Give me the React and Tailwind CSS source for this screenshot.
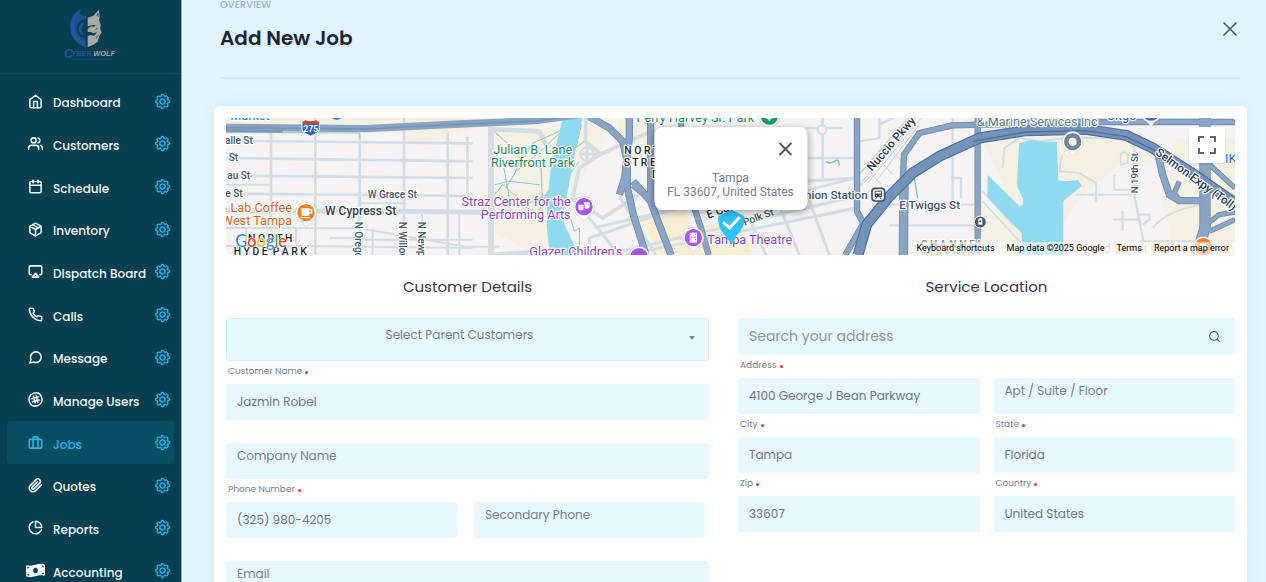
import React from "react";
import {
  FiHome,
  FiUsers,
  FiCalendar,
  FiPackage,
  FiAirplay,
  FiPhone,
  FiMessageCircle,
  FiBriefcase,
  FiPaperclip,
  FiPieChart,
  FiSearch,
} from "react-icons/fi";
import { BsGear } from "react-icons/bs";
import { FaMoneyBillWave } from "react-icons/fa";

function HashBadge({ className }) {
  return (
    <svg viewBox="0 0 24 24" fill="none" stroke="currentColor" className={className} aria-hidden="true">
      <path d="M8.5 2.2C14 .4 18.6 1.5 20.8 6.2C23.8 12.5 22.8 18.4 16.5 21.3C9.5 24.2 4.5 22 2.4 16C.4 9.5 2.3 4.5 8.5 2.2Z" />
      <path d="M8.7 6.8L11.5 17.2M13 5.8L15.8 16.2M6 10.8L16.7 7.9M7.4 15.6L18.2 12.7" strokeLinecap="round" />
    </svg>
  );
}

const NAV = [
  { label: "Dashboard", Icon: FiHome },
  { label: "Customers", Icon: FiUsers },
  { label: "Schedule", Icon: FiCalendar },
  { label: "Inventory", Icon: FiPackage },
  { label: "Dispatch Board", Icon: FiAirplay },
  { label: "Calls", Icon: FiPhone },
  { label: "Message", Icon: FiMessageCircle },
  { label: "Manage Users", Icon: HashBadge },
  { label: "Jobs", Icon: FiBriefcase, active: true },
  { label: "Quotes", Icon: FiPaperclip },
  { label: "Reports", Icon: FiPieChart },
  { label: "Accounting", Icon: FaMoneyBillWave, wide: true },
];

function Logo() {
  return (
    <svg viewBox="190 20 165 165" className="size-[55px]" role="img" aria-label="Cyber Wolf">
      <path d="M246 27C222 34 210 57 212 84C214 112 230 132 258 140V122C238 118 228 104 227 84C226 60 234 42 246 27Z" fill="#1f55a0" />
      <path d="M246 27C232 40 226 60 227 84C228 104 238 118 258 122V114C243 112 232 102 231 86C230 70 240 58 259 57V46C240 48 236 40 246 27Z" fill="#1f55a0" opacity=".8" />
      <path d="M253 66C238 68 234 84 240 96C243 102 247 105 252 106L250 98C243 91 244 76 253 71Z" fill="#1f55a0" />
      <path
        d="M264 52L281 46L298 28L300 50L298 58L304 76L301 84L306 96L299 108L294 124L280 134L264 140V108L271 104L284 106L292 96L281 99L272 94L264 95V86L275 78L283 80L288 74L276 75L264 78Z"
        fill="#a9a9a7"
      />
      <path d="M291 47L295 39L296 50M287 88L295 83M289 114L296 104" fill="none" stroke="#053f50" strokeWidth="2" />
      <text x="193" y="172" fontFamily="Liberation Sans, sans-serif" fontSize="37" fontWeight="700" fontStyle="italic" fill="#1f55a0">C</text>
      <text x="215" y="168" fontFamily="Liberation Sans, sans-serif" fontSize="22" fontWeight="700" fontStyle="italic" fill="#1f55a0">YBER</text>
      <text x="281" y="168" fontFamily="Liberation Sans, sans-serif" fontSize="22" fontWeight="700" fontStyle="italic" fill="#a9a9a7">WOLF</text>
      <path d="M215 177H338" stroke="#1b4f80" strokeWidth="3" strokeDasharray="4 3" />
    </svg>
  );
}

function Sidebar() {
  return (
    <aside className="w-[182px] shrink-0 overflow-hidden border-r border-[#8fb0bd] bg-[#053f50]">
      <div className="flex h-[74px] justify-center border-b border-[#12495a] pt-[7px]">
        <Logo />
      </div>
      <nav aria-label="Main" className="px-[7px] pt-[6px]">
        <ul className="grid h-[512px] grid-rows-12">
          {NAV.map(({ label, Icon, active, wide }) => (
            <li
              key={label}
              className={
                active
                  ? "flex items-center rounded bg-[#084e62] pr-1 pl-5 text-[#2bb3ea]"
                  : "flex items-center pr-1 pl-5 text-[#f1f6f8]"
              }
            >
              <a href="#" className="flex flex-1 items-center gap-[10px] whitespace-nowrap">
                <span className="flex w-4 justify-center">
                  <Icon className={wide ? "size-[19px] shrink-0" : "size-[15px] shrink-0 stroke-[2.5]"} />
                </span>
                <span className="pt-1 text-xs leading-5 font-medium">{label}</span>
              </a>
              <button type="button" aria-label={label + " settings"} className="text-[#22b9f5]">
                <BsGear className="size-[15px] overflow-visible stroke-current stroke-[0.5]" />
              </button>
            </li>
          ))}
        </ul>
      </nav>
    </aside>
  );
}

const HALO = { stroke: "#ffffff", strokeWidth: 7, strokeLinejoin: "round", paintOrder: "stroke" };

function Pin({ x, y, color, children }) {
  return (
    <g transform={`translate(${x} ${y})`}>
      <path d="M0 43L-14 28A31 31 0 1 1 14 28Z" fill="#ffffff" stroke="#c5c9cc" strokeWidth="1.5" />
      <circle r="26" fill={color} />
      {children}
    </g>
  );
}

const MINOR_HIGHWAYS = [
  { d: "M1090 -4L1150 30L1190 70L1204 130V210L1222 290L1260 411", w: 20 },
  { d: "M1210 -4V60L1196 180L1180 230M1274 -4V250L1222 190M1222 200L1270 240L1300 320L1335 411", w: 20 },
  { d: "M1365 0V60M1395 240L1425 330L1448 411", w: 17 },
  { d: "M1893 -4V280L1920 330M1858 411L1910 320L2040 190", w: 17 },
  { d: "M2255 0V411", w: 17 },
  { d: "M2032 411L2034 200", w: 26 },
  { d: "M2030 200L2034 110L2080 45L2180 22L2350 18L2440 12H3027", w: 17 },
  { d: "M2937 0V330L2912 411", w: 32 },
  { d: "M2795 105L2810 170L2830 230L2860 248H2930", w: 20 },
  { d: "M2860 190L2845 225L2860 246M2940 130L3027 210M2940 320L2980 290L3027 282M2950 340L3027 305", w: 14 },
];

const EXPRESSWAY = "M1896 411L1922 320L1990 235L2060 165L2140 115L2260 60L2400 38L2580 34L2700 52L2780 90L2890 160L3027 255";

function MapDrawing() {
  return (
    <svg
      viewBox="0 0 3027 411"
      preserveAspectRatio="xMidYMid slice"
      className="block h-[137px] w-full"
      fontFamily="Roboto, sans-serif"
      role="img"
      aria-label="Map of Tampa"
    >
      <rect width="3027" height="411" fill="#f5f3f4" />

      {/* park and district tints */}
      <g fill="#f5f0e4">
        <path d="M0 0H900V20L760 24L640 66L560 70L500 44H0Z" />
        <path d="M790 30H1080L1000 260L900 200L800 90Z" />
        <path d="M800 210L955 220L960 300L930 411L800 340Z" />
        <path d="M960 310L980 411H925L915 360Z" />
        <path d="M1080 0H1150L1130 90L1080 160L1040 240L1030 180Z" />
        <path d="M1170 0H1260L1330 200L1180 60Z" />
        <path d="M1240 300L1370 240L1420 411H1300Z" fill="#f8eed3" />
        <path d="M1400 330L1540 300L1580 411H1420Z" fill="#f8eed3" />
        <path d="M2270 70L2500 40L2720 50L2800 140L2680 140L2560 240L2500 330V411H2270V330L2360 250Z" />
        <path d="M2850 60H3027V411H2850L2810 260Z" />
        <path d="M2260 250L2400 411H2260Z" />
      </g>

      {/* local streets */}
      <g fill="none" stroke="#d4dde4" strokeWidth="8">
        <path d="M0 68L740 76M0 120L740 130M0 173L740 180M0 227L740 234" />
        <path d="M0 200H130M400 256H540M0 330L400 331L720 386H820M400 360H310M380 365H740" strokeWidth="6" />
        <path d="M0 384H240L740 390" strokeWidth="6" />
        <path d="M135 40V340M268 0V411M401 44V411M534 0V411M665 44V411M724 56V236" />
        <path d="M588 284V411M700 290V411M440 331V411M60 331V384M210 331V384" strokeWidth="6" />
        <path d="M0 278L480 280L930 284" strokeWidth="15" />
        <path d="M795 26V411" strokeWidth="18" />
        <path d="M800 34L940 40L965 90M795 411L930 402H960" strokeWidth="14" />
        <path d="M1080 0L1078 70L1125 108L1265 45M1125 108L1060 150L1040 240L1130 300L1270 210" strokeWidth="11" />
        <circle cx="1083" cy="108" r="20" strokeWidth="6" />
        <path d="M1060 108H1120M1083 70V140M1040 240L1180 411M1090 411V360L1560 200L1890 180" strokeWidth="9" />
        <path d="M1140 411L1890 235M1105 330L1700 190M1200 411L1890 270M1180 235L1290 411M1620 411L1570 300M1720 411L1650 240M1810 411L1740 220" strokeWidth="9" />
        <path d="M1650 120H1890M1790 0V180M1740 30H1850M1890 180L1650 240" strokeWidth="8" />
        <circle cx="1788" cy="35" r="13" strokeWidth="6" fill="#f5f3f4" />
        <path d="M1900 70L1960 60V0M1960 20L2010 -5M1990 260H2250M1990 322H2260M2180 0V260M2175 180H2205V240" strokeWidth="7" />
        <path d="M2330 150L2335 90L2380 60L2440 70L2520 60H2740M2508 110L2500 160L2560 165L2610 195V250M2665 170V215H2740M2550 230H2720" strokeWidth="6" />
        <path d="M2725 50V230L2760 411M2660 305H2740M2690 280V340M2740 290H2770V305L2750 320M2740 370H2920" strokeWidth="7" />
        <path d="M2270 220L2360 320M2270 250L2390 380M2780 330Q2830 270 2940 260M2685 140C2680 100 2690 95 2705 110V135Z" strokeWidth="5" />
      </g>

      {/* rail yard */}
      <g fill="none" stroke="#c9cdd1" strokeWidth="3">
        <path d="M1900 200L2070 0M1925 195L2085 0M1950 190L2080 20M1935 165L1970 205M1965 130L2000 170M1995 95L2030 135M2025 60L2060 100M1890 215L1940 170" />
        <path d="M1890 180L2055 -10" stroke="#a7d9c4" strokeWidth="4" />
        <path d="M2065 180L2075 240M1800 130Q1810 140 1825 130T1840 142" stroke="#7cc5a5" strokeWidth="4" />
      </g>

      {/* park paths */}
      <g fill="none" stroke="#8ccdb0" strokeWidth="3">
        <path d="M0 44H170L400 45L402 60" />
        <path d="M806 42L860 90L890 130L920 75L1000 40M840 210L870 160L955 90L985 60L1000 45" />
        <path d="M806 230L830 200L900 260L960 230L930 300M830 130L850 240L940 290M865 170L880 130L945 150L950 260M806 200L850 190L940 200M1066 20L1050 90L1075 70M1030 170L1060 130M1030 290L1045 340L1060 330V411" />
      </g>

      {/* water */}
      <g fill="#8fdaee">
        <path d="M1010 0H1069L1057 56L1042 126L1027 211L1012 286L1014 316L1047 386V411H972L962 326L964 276L954 236L967 216L977 126L997 56Z" />
        <path d="M2285 171L2382 266L2392 258L2390 240L2373 205L2379 76L2400 70L2422 65L2440 70L2492 71L2497 186L2515 190L2557 187L2567 204L2512 250V411H2389L2387 346L2284 236Z" />
      </g>

      {/* highways */}
      <g fill="none" strokeLinejoin="round">
        <path d="M0 28L420 32L700 18L930 8L1060 -10" stroke="#8aa3c2" strokeWidth="22" />
        <path d="M0 29L420 33L700 19L930 9L1060 -9" stroke="#7390b5" strokeWidth="4" />
        <path d="M0 38L170 40" stroke="#7897b9" strokeWidth="8" />
        {MINOR_HIGHWAYS.map(({ d, w }) => (
          <path key={d} d={d} stroke="#6d8bb0" strokeWidth={w + 2} />
        ))}
        {MINOR_HIGHWAYS.map(({ d, w }) => (
          <path key={d} d={d} stroke="#8ba4c4" strokeWidth={w - 3} />
        ))}
        <path d={EXPRESSWAY} stroke="#4c6f9d" strokeWidth="33" />
        <path d={EXPRESSWAY} stroke="#7493bb" strokeWidth="26" />
        <path d="M2240 70L2400 42L2580 38L2700 56L2780 94L2890 164L3027 259" stroke="#4c6f9d" strokeWidth="4" />
      </g>

      {/* street names */}
      <g fill="#43566b" fontSize="30" fontWeight="500" {...HALO}>
        <text x="-3" y="77">alle St</text>
        <text x="8" y="130">St</text>
        <text x="4" y="183">au St</text>
        <text x="-2" y="236">e St</text>
        <text x="425" y="240">W Grace St</text>
        <text x="297" y="291" fontSize="36" fill="#2c3b4d">W Cypress St</text>
        <text transform="translate(387 311) rotate(90)">N Oregon</text>
        <text transform="translate(520 311) rotate(90)">N Willow</text>
        <text transform="translate(576 311) rotate(90)">N Newport</text>
        <text transform="translate(1447 302) rotate(-20)" fontSize="34" fill="#2c3b4d">E Cass St</text>
        <text transform="translate(1556 323) rotate(-20)">Polk St</text>
        <text transform="translate(1938 161) rotate(-49)" fill="#2c3b4d" fontSize="35">Nuccio Pkwy</text>
        <text x="1925" y="243" textAnchor="end" fontSize="35">Union Station</text>
        <text x="2020" y="274" fontSize="35">E Twiggs St</text>
        <text transform="translate(2737 226) rotate(-90)" fontSize="29">N 19th St</text>
        <text transform="translate(2786 108) rotate(36)" fontSize="35" fill="#243b5c">Selmon Expy (Toll)</text>
      </g>

      {/* districts */}
      <g fill="#22272b" fontSize="31" fontWeight="500" {...HALO}>
        <text x="66" y="372">N O R T H</text>
        <text x="23" y="410">{"H Y D E \u00a0P A R K"}</text>
        <text x="1195" y="108">N O R T H</text>
        <text x="1193" y="144">S T R E E T</text>
        <text x="1278" y="180">D I S T R I C T</text>
        <g fill="#777c80">
          <text x="2084" y="391">C H A N N E L</text>
          <text x="2084" y="427">D I S T R I C T</text>
        </g>
      </g>

      {/* places */}
      <g fontSize="38" {...HALO}>
        <text x="-6" y="5" fill="#1a73e8">l Market</text>
        <g fill="#d8651b">
          <text x="198" y="283" textAnchor="end">&amp; Lab Coffee</text>
          <text x="198" y="321" textAnchor="end">West Tampa</text>
        </g>
        <g fill="#188a5b" textAnchor="middle">
          <text x="920" y="109">Julian B. Lane</text>
          <text x="920" y="148">Riverfront Park</text>
          <text x="1408" y="11">Perry Harvey Sr. Park</text>
        </g>
        <g fill="#8b3fd9">
          <text x="1034" y="264" textAnchor="end">Straz Center for the</text>
          <text x="1034" y="303" textAnchor="end">Performing Arts</text>
          <text x="910" y="415">Glazer Children's</text>
          <text x="1444" y="378">Tampa Theatre</text>
        </g>
        <text x="2252" y="24" fill="#5e7681">&amp; Marine Services Inc</text>
        <text x="2642" y="6" fill="#4a55d0">Citgo</text>
        <text x="2997" y="135" fill="#1a73e8">IKEA</text>
        <text x="2570" y="405" fill="#ef9a66">22nd Street Coffee</text>
      </g>

      <g>
        <path d="M228 12L238 6Q254 12 270 6L280 12V34Q278 46 254 54Q230 46 228 34Z" fill="#2f66c4" stroke="#ffffff" strokeWidth="3" />
        <path d="M230 11L238 7Q254 13 270 7L278 11V17H230Z" fill="#d5453b" />
        <text x="254" y="42" textAnchor="middle" fontSize="26" fontWeight="700" fill="#ffffff">275</text>
      </g>
      <path d="M318 0Q332 10 346 0Z" fill="#1a73e8" />

      <Pin x={240} y={284} color="#f6801f">
        <path d="M-14 -13H10V3Q10 10 3 10H-7Q-14 10 -14 3ZM-16 13H12V17H-16Z" fill="#ffffff" />
        <path d="M10 -9H17V1H10" fill="none" stroke="#ffffff" strokeWidth="4" />
      </Pin>
      <Pin x={1074} y={266} color="#a855f7">
        <path d="M-17 -6H-1V8Q-9 15 -17 8ZM0 -13H17V2Q9 10 2 4V-7H0Z" fill="#ffffff" />
        <path d="M-13 1H-11M-7 1H-5M5 -6H7M11 -6H13" stroke="#a855f7" strokeWidth="3" />
      </Pin>
      <Pin x={1402} y={359} color="#a855f7">
        <path d="M-11 -15H11V15H-11Z" fill="#ffffff" />
        <path d="M-7 -12V14M7 -12V14M-7 0H7" stroke="#a855f7" strokeWidth="3" strokeDasharray="4 4" />
      </Pin>
      <Pin x={1239} y={416} color="#a855f7" />
      <Pin x={1630} y={-6} color="#149c68">
        <path d="M-10 6H10M0 -6V14" stroke="#ffffff" strokeWidth="5" />
      </Pin>
      <Pin x={2540} y={71} color="#6d8891">
        <circle r="12" fill="#ffffff" />
      </Pin>
      <Pin x={2775} y={-18} color="#5661d8" />
      <Pin x={2932} y={386} color="#f6801f">
        <path d="M-13 -9H9V7H-13Z" fill="#ffffff" />
      </Pin>

      <g>
        <rect x="1938" y="211" width="38" height="38" rx="9" fill="#f5f3f4" stroke="#3f5267" strokeWidth="5" />
        <rect x="1946" y="218" width="22" height="20" rx="4" fill="#3f5267" />
        <path d="M1949 224H1965" stroke="#ffffff" strokeWidth="5" />
        <path d="M1950 233H1953M1961 233H1964" stroke="#ffffff" strokeWidth="3" />
        <path d="M1948 244L1952 238M1966 244L1962 238" stroke="#3f5267" strokeWidth="3" />
        <circle cx="2263" cy="312" r="18" fill="#4c5c69" stroke="#ffffff" strokeWidth="3" />
        <path d="M2257 307Q2257 300 2263 300T2269 307V320H2257ZM2261 320V324M2265 320V324" fill="#ffffff" />
        <path d="M2260 307H2266V312H2260Z" fill="#4c5c69" />
      </g>

      {/* selected location */}
      <path d="M1477 294L1517 275L1555 294C1558 320 1545 340 1532 352L1517 379L1497 352C1484 340 1474 320 1477 294Z" fill="#2dc3fa" />
      <path d="M1492 313L1511 330L1541 297" fill="none" stroke="#ffffff" strokeWidth="9" />

      <text x="28" y="386" fontFamily="Lato, sans-serif" fontSize="49" fontWeight="500" {...HALO} strokeWidth={3}>
        <tspan fill="#4285f4">G</tspan>
        <tspan fill="#ea4335">o</tspan>
        <tspan fill="#fbbc04">o</tspan>
        <tspan fill="#4285f4">g</tspan>
        <tspan fill="#34a853">l</tspan>
        <tspan fill="#ea4335">e</tspan>
      </text>
    </svg>
  );
}

function MapPanel() {
  return (
    <div className="relative overflow-hidden rounded bg-[#f5f3f4] font-[Roboto,sans-serif]">
      <MapDrawing />
      <div className="absolute top-[9px] left-1/2 h-[83px] w-[153px] -translate-x-1/2 rounded-lg bg-white shadow-[0_2px_7px_1px_rgba(0,0,0,0.3)]">
        <button type="button" aria-label="Close" className="absolute top-[15px] right-[15px] text-[#555555]">
          <svg viewBox="0 0 14 14" className="size-[14px]" stroke="currentColor" strokeWidth="1.8" aria-hidden="true">
            <path d="M1 1L13 13M13 1L1 13" />
          </svg>
        </button>
        <p className="pt-11 text-center text-xs leading-[14px] whitespace-nowrap text-[#74808b]">
          Tampa
          <br />
          FL 33607, United States
        </p>
      </div>
      <button
        type="button"
        aria-label="Toggle fullscreen view"
        className="absolute top-[9px] right-[10px] flex size-9 items-center justify-center rounded-sm bg-white text-[#666666] shadow-sm"
      >
        <svg viewBox="0 0 18 18" className="size-[18px]" fill="none" stroke="currentColor" strokeWidth="2" aria-hidden="true">
          <path d="M1 6V1H6M12 1H17V6M17 12V17H12M6 17H1V12" />
        </svg>
      </button>
      <div className="absolute right-0 bottom-0 flex gap-3 bg-white/60 pr-[6px] pl-1 text-[9px] leading-[13px] whitespace-nowrap text-black">
        <button type="button">Keyboard shortcuts</button>
        <span>Map data ©2025 Google</span>
        <a href="#">Terms</a>
        <a href="#">Report a map error</a>
      </div>
    </div>
  );
}

function Field({ id, label, value, placeholder }) {
  return (
    <div>
      <div className="h-[23px] pt-[2px] pl-[2px] text-[9px] leading-4 text-[#74808c]">
        {label && (
          <label htmlFor={id} className="flex items-center gap-[3px]">
            {label}
            <span className="mt-[2px] size-[3px] rounded-full bg-[#fb2a2a]" />
          </label>
        )}
      </div>
      <input
        id={id}
        type="text"
        defaultValue={value}
        placeholder={placeholder}
        aria-label={label ? undefined : placeholder}
        className={
          label
            ? "block h-9 w-full rounded-[3px] bg-[#e8f8ff] px-[11px] text-xs text-[#6c7782] outline-none"
            : "block h-9 w-full rounded-[3px] bg-[#e8f8ff] px-[11px] pb-[10px] text-xs text-[#6c7782] outline-none placeholder:text-[#74808a]"
        }
      />
    </div>
  );
}

export default function App() {
  return (
    <div className="flex h-screen overflow-hidden bg-[#e1f4fd] font-[Poppins,Inter,sans-serif]">
      <Sidebar />
      <main className="min-w-0 flex-1 overflow-hidden pr-[19px] pl-8">
        <header className="mr-[7px] ml-[6px] flex h-[79px] items-start justify-between border-b-2 border-[#d5e9fb]">
          <div>
            <p className="text-[10px] leading-[10px] font-medium text-[#9db0cf]">OVERVIEW</p>
            <h1 className="pt-[14px] text-xl leading-7 font-semibold text-[#1b2438]">Add New Job</h1>
          </div>
          <button type="button" aria-label="Close" className="mt-[22px] mr-[3px] text-[#4b5359]">
            <svg viewBox="0 0 14 14" className="size-[14px]" stroke="currentColor" strokeWidth="1.5" aria-hidden="true">
              <path d="M.5 .5L13.5 13.5M13.5 .5L.5 13.5" />
            </svg>
          </button>
        </header>

        <section className="mt-[27px] min-h-full rounded-md bg-white p-3 shadow-[0_0_14px_3px_#d8edfb]">
          <MapPanel />
          <form className="grid grid-cols-[483fr_497fr] gap-x-[29px]">
            <fieldset className="min-w-0">
              <h2 className="pt-5 pb-[19px] text-center text-[15px] leading-6 text-[#2d3845]">Customer Details</h2>
              <div className="relative">
                <select
                  aria-label="Parent customer"
                  defaultValue=""
                  className="block h-[43px] w-full appearance-none rounded-[3px] border border-[#d8eefb] bg-[#e8f8ff] pr-7 pb-[9px] pl-3 text-center text-xs text-[#74808a] outline-none [text-align-last:center]"
                >
                  <option value="">Select Parent Customers</option>
                </select>
                <svg viewBox="0 0 6 4" className="pointer-events-none absolute top-[18px] right-[14px] h-1 w-[6px]" aria-hidden="true">
                  <path d="M0 0H6L3 4Z" fill="#7d868e" />
                </svg>
              </div>
              <Field id="customer-name" label="Customer Name" value="Jazmin Robel" />
              <Field id="company-name" placeholder="Company Name" />
              <div className="grid grid-cols-2 gap-x-[17px] pr-1">
                <Field id="phone" label="Phone Number" value="(325) 980-4205" />
                <Field id="phone-2" placeholder="Secondary Phone" />
              </div>
              <Field id="email" placeholder="Email" />
            </fieldset>

            <fieldset className="min-w-0">
              <h2 className="pt-5 pb-[19px] text-center text-[15px] leading-6 text-[#2d3845]">Service Location</h2>
              <div className="flex h-[37px] items-center rounded-[3px] bg-[#e8f8ff] pr-[14px] pl-[11px]">
                <input
                  type="text"
                  aria-label="Search your address"
                  placeholder="Search your address"
                  className="h-full min-w-0 flex-1 bg-transparent text-sm text-[#6c7782] outline-none placeholder:text-[#8c979f]"
                />
                <button type="button" aria-label="Search" className="text-[#4e5a63]">
                  <FiSearch className="size-[13px]" />
                </button>
              </div>
              <div className="grid grid-cols-2 gap-x-[14px]">
                <Field id="address" label="Address" value="4100 George J Bean Parkway" />
                <Field id="apt" placeholder="Apt / Suite / Floor" />
                <Field id="city" label="City" value="Tampa" />
                <Field id="state" label="State" value="Florida" />
                <Field id="zip" label="Zip" value="33607" />
                <Field id="country" label="Country" value="United States" />
              </div>
            </fieldset>
          </form>
        </section>
      </main>
    </div>
  );
}
